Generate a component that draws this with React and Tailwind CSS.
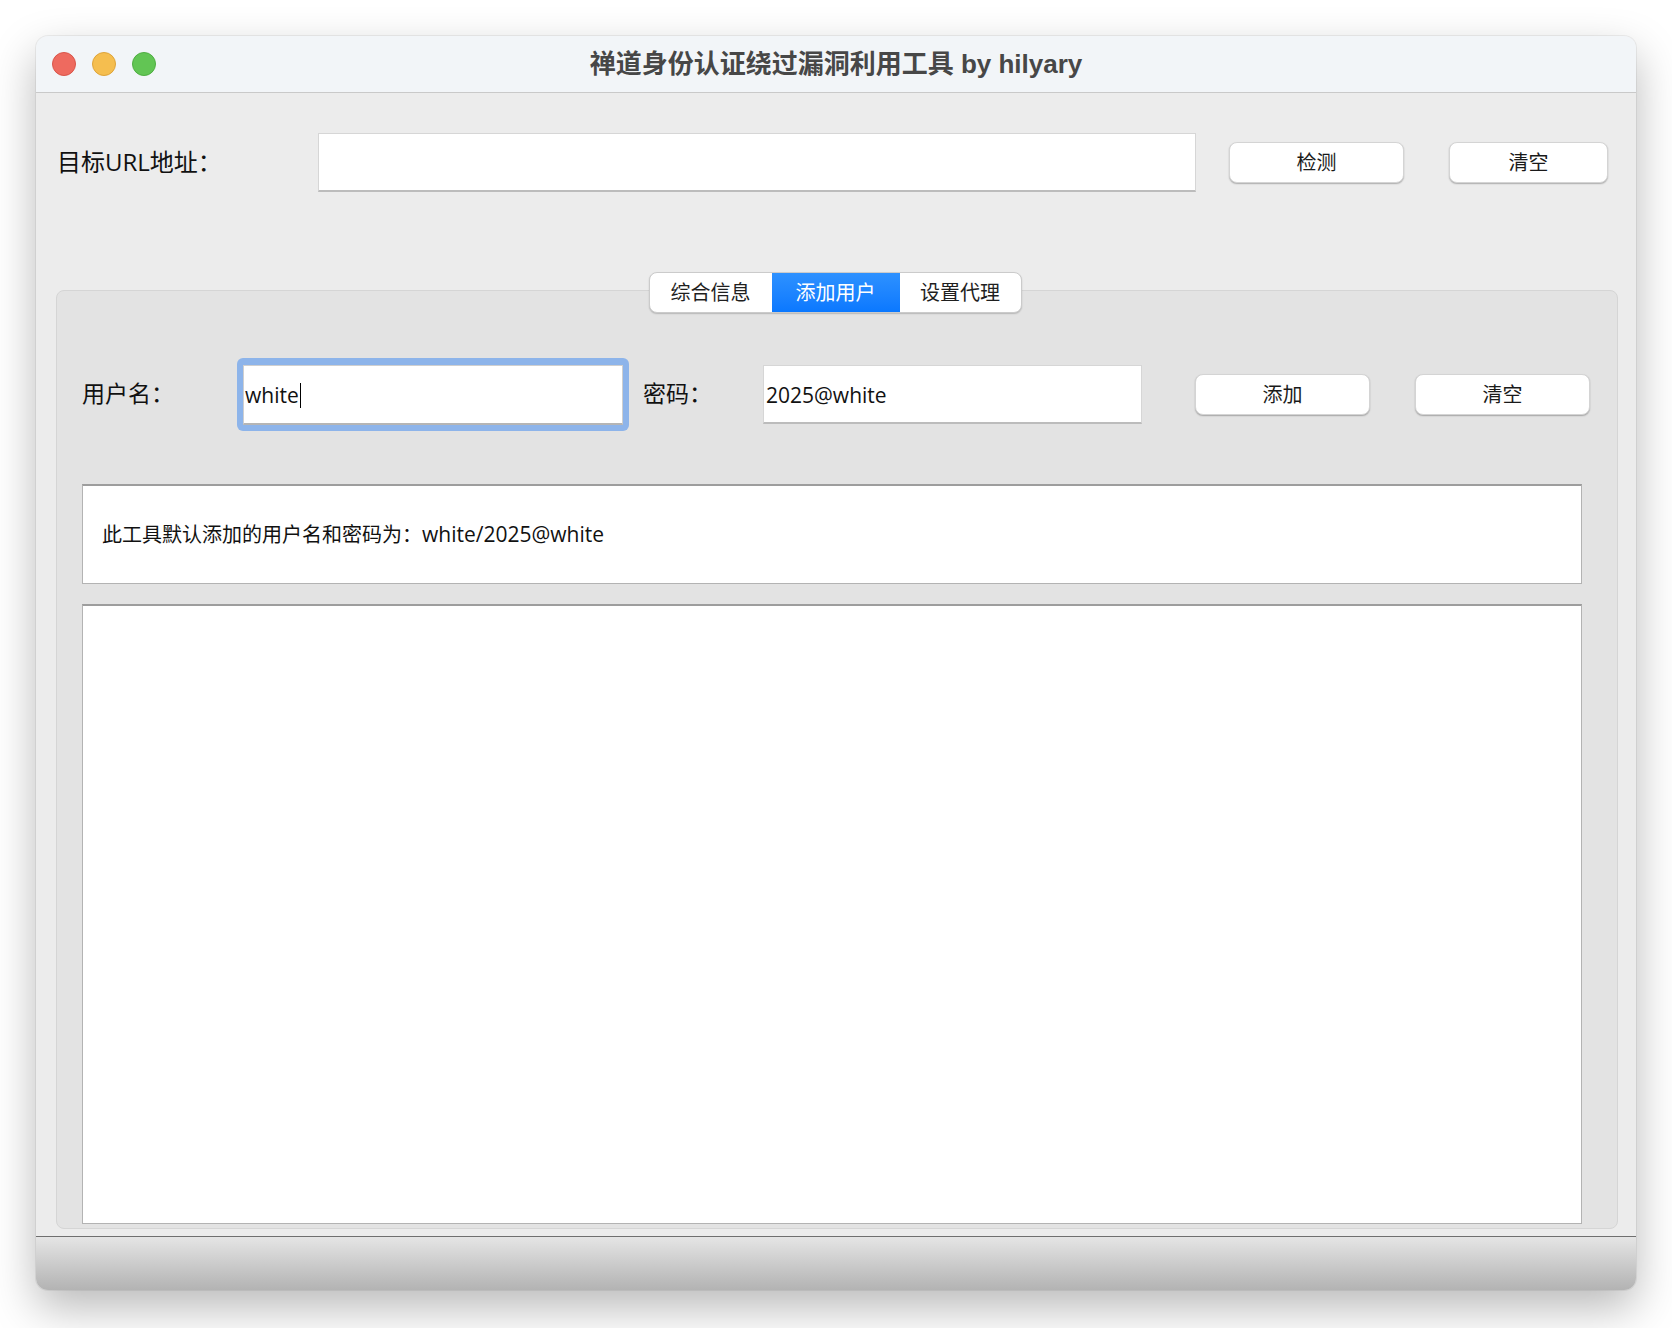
import React from "react";

function Btn({ children, w }) {
  return (
    <div
      className={`${w} h-[41px] bg-white rounded-[8px] border border-[#d4d4d4] shadow-[0_1px_1.5px_rgba(0,0,0,0.28)] flex items-center justify-center text-[20px] text-[#1a1a1a]`}
    >
      {children}
    </div>
  );
}

function Latin({ children }) {
  return <span className="text-[21px] font-['Open_Sans','Noto_Sans_CJK_SC',sans-serif]">{children}</span>;
}

export default function App() {
  return (
    <div className="w-[1672px] h-[1328px] bg-white pt-[36px] pl-[36px] font-['Liberation_Sans','Noto_Sans_CJK_SC',sans-serif]">
      <div className="w-[1600px] h-[1254px] rounded-[12px] flex flex-col overflow-hidden bg-[#ececec] shadow-[0_18px_45px_rgba(0,0,0,0.28),0_0_0_1px_rgba(0,0,0,0.06)]">
        {/* title bar */}
        <div className="h-[57px] shrink-0 bg-[#f2f5f8] border-b border-[#c9c9c9] relative flex items-center justify-center">
          <div className="absolute left-[16px] top-[16px] flex gap-[16px]">
            <div className="w-[24px] h-[24px] rounded-full bg-[#ee6a5f] border border-[#d9554a]" />
            <div className="w-[24px] h-[24px] rounded-full bg-[#f5be4f] border border-[#dea43a]" />
            <div className="w-[24px] h-[24px] rounded-full bg-[#62c554] border border-[#4fae42]" />
          </div>
          <div className="text-[26px] font-bold text-[#474747] font-['Liberation_Sans','Noto_Sans_CJK_SC',sans-serif]">
            禅道身份认证绕过漏洞利用工具 by hilyary
          </div>
        </div>

        {/* content */}
        <div className="flex-1 flex flex-col pt-[40px]">
          {/* URL row */}
          <div className="flex items-center h-[59px] pl-[21px]">
            <div className="w-[261px] text-[24px] text-[#111]">
              目标<span className="font-['Open_Sans',sans-serif]">URL</span>地址：
            </div>
            <div className="w-[878px] h-[59px] bg-white border border-[#d6d6d6] border-b-2 border-b-[#bcbcbc]" />
            <div className="ml-[33px]">
              <Btn w="w-[175px]">检测</Btn>
            </div>
            <div className="ml-[45px]">
              <Btn w="w-[159px]">清空</Btn>
            </div>
          </div>

          {/* panel */}
          <div className="ml-[20px] mt-[98px] w-[1562px] h-[939px] relative bg-[#e3e3e3] border border-[#d5d5d5] rounded-[8px] pl-[25px] pt-[67px]">
            {/* tabs */}
            <div className="absolute left-0 right-0 -top-[19px] flex justify-center">
              <div className="flex h-[41px] rounded-[8px] border border-[#cbcbcb] bg-white shadow-[0_1px_1.5px_rgba(0,0,0,0.2)] overflow-hidden text-[20px] ml-[-4px]">
                <div className="w-[122px] flex items-center justify-center text-[#1f1f1f]">综合信息</div>
                <div className="w-[128px] flex items-center justify-center text-white bg-gradient-to-b from-[#2d91ff] to-[#0a78ff]">添加用户</div>
                <div className="w-[121px] flex items-center justify-center text-[#1f1f1f]">设置代理</div>
              </div>
            </div>

            {/* user row */}
            <div className="flex items-center h-[73px]">
              <div className="w-[155px] text-[23px] text-[#111]">用户名：</div>
              <div className="w-[392px] h-[73px] rounded-[6px] bg-[#8db4ea] p-[6px] pt-[7px] pb-[6px]">
                <div className="w-full h-full bg-white border border-[#cfcfcf] border-b-2 border-b-[#b5b5b5] flex items-center pl-[1px] pt-[2px] text-[#111]">
                  <Latin>white</Latin>
                  <span className="inline-block w-[1.5px] h-[25px] bg-black ml-[1px]" />
                </div>
              </div>
              <div className="w-[120px] ml-[14px] text-[23px] text-[#111]">密码：</div>
              <div className="w-[379px] h-[59px] bg-white border border-[#d6d6d6] border-b-2 border-b-[#bcbcbc] flex items-center pl-[2px] pt-[3px] text-[#111]">
                <Latin>2025@white</Latin>
              </div>
              <div className="ml-[53px]">
                <Btn w="w-[175px]">添加</Btn>
              </div>
              <div className="ml-[45px]">
                <Btn w="w-[175px]">清空</Btn>
              </div>
            </div>

            {/* info box */}
            <div className="mt-[53px] w-[1500px] h-[100px] bg-white border border-[#b3b3b3] border-t-2 border-t-[#9d9d9d] flex items-center pl-[19px] text-[20px] text-[#111]">
              此工具默认添加的用户名和密码为：<Latin>white/2025@white</Latin>
            </div>

            {/* textarea */}
            <div className="mt-[20px] w-[1500px] h-[620px] bg-white border border-[#b3b3b3] border-t-2 border-t-[#9d9d9d]" />
          </div>
          <div className="h-[7px]" />
        </div>

        {/* bottom bar */}
        <div className="h-[54px] shrink-0 border-t border-[#6f6f6f] bg-gradient-to-b from-[#e5e5e5] to-[#b3b3b3]" />
      </div>
    </div>
  );
}
